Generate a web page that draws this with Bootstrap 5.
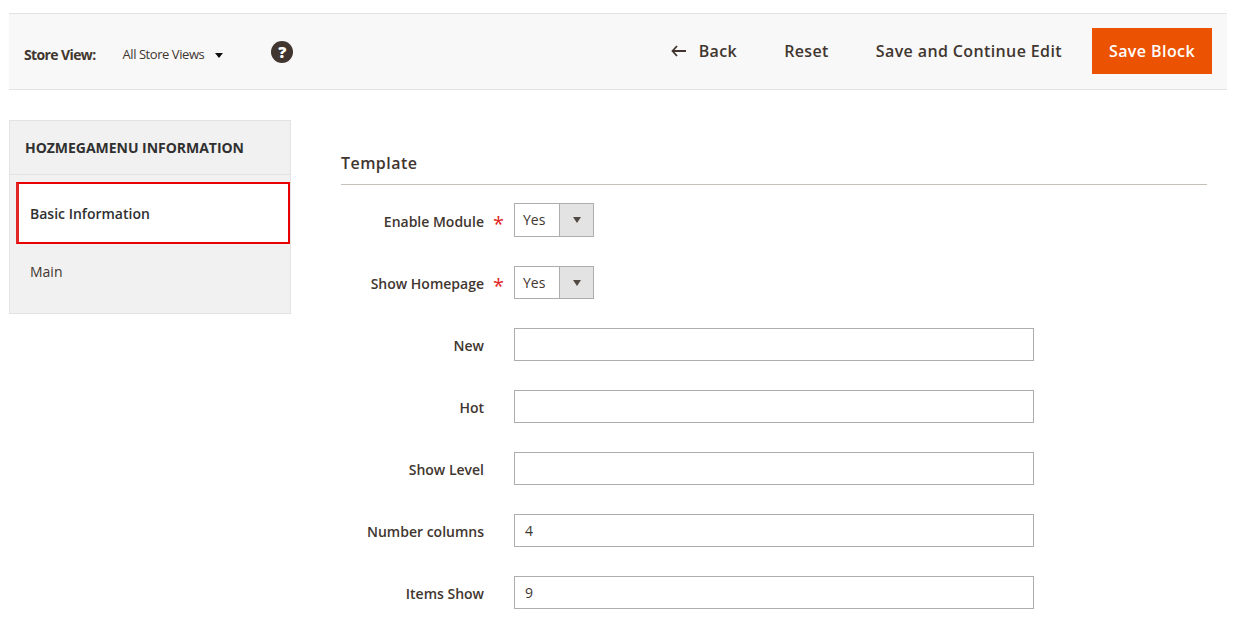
<!DOCTYPE html>
<html lang="en">
<head>
<meta charset="utf-8">
<title>Template</title>
<link href="https://cdn.jsdelivr.net/npm/bootstrap@5.3.0/dist/css/bootstrap.min.css" rel="stylesheet">
<style>
html,body{height:623px;overflow:hidden}
body{background:#fff;font-family:"Open Sans",sans-serif;color:#41362f;font-size:14px}
.pg{width:1218px;margin:13px 0 0 9px}
.tbar{height:77px;background:#f8f8f8;border-top:1px solid #e3e3e3;border-bottom:1px solid #e3e3e3;padding:0 15px}
.sv-label{font-size:14px;font-weight:700;letter-spacing:-.62px;color:#41362f;margin-top:5px}
.sv-val{font-size:13px;letter-spacing:-.44px;color:#41362f;margin-left:27px;margin-top:6px}
.sv-caret{width:0;height:0;border-left:4.5px solid transparent;border-right:4.5px solid transparent;border-top:5px solid #111;margin-left:11px;margin-top:8px}
.help{width:22px;height:22px;border-radius:50%;background:#41362f;color:#fff;font-weight:800;font-size:16px;line-height:22px;text-align:center;margin-left:48px}
.act{font-size:16px;font-weight:600;color:#41362f;letter-spacing:.38px;background:none;border:0;padding:0;margin-top:-2px}
.act-back{margin-right:47px;gap:12px;padding-left:2px}
.act-reset{margin-right:47px}
.act-save{margin-right:30px}
.act-main{width:120px;height:46px;background:#eb5202;color:#fff;font-size:16px;font-weight:600;letter-spacing:.42px;border:0;padding:0;margin-top:-1px}
.mainrow{margin-top:30px}
.side{width:282px;height:194px;background:#f1f1f1;border:1px solid #e3e3e3;flex:none}
.side-h{height:54px;padding:0 15px;font-size:14px;font-weight:700;letter-spacing:-.03px;color:#303030;border-bottom:1px solid #e3e3e3;margin-bottom:7px;line-height:53px}
.side-a{display:block;height:62px;margin-left:6px;width:274px;background:#fff;border:2px solid #e90000;border-left:3px solid #e22626;padding-left:11px;font-size:14px;font-weight:600;line-height:60px;color:#303030}
.side-b{padding:16px 20px;font-size:14px;line-height:24px;color:#41362f}
.content{margin-left:50px;width:866px}
.fs-t{font-size:16px;font-weight:600;color:#41362f;letter-spacing:.45px;height:46px;margin-top:19px;line-height:48px;border-bottom:1px solid #c5c1b6;margin-bottom:18px;padding-bottom:0}
.frow{height:33px;margin-bottom:29px}
.flabel{width:143px;text-align:right;font-size:14px;font-weight:600;color:#41362f;flex:none;padding-top:1px}
.req{width:30px;flex:none;color:#e22626;font-size:20px;line-height:1;padding-left:9px;padding-top:7px}
.finput{width:520px;height:33px;border:1px solid #adadad;padding:0 10px;font-size:14px;color:#41362f;line-height:31px;background:#fff}
.fsel{width:80px;height:34px;border:1px solid #adadad;background:#fff}
.fsel-v{width:44px;padding-left:8px;font-size:14px;line-height:32px}
.fsel-b{flex:1;background:#e3e3e3;border-left:1px solid #adadad}
.fsel-c{width:0;height:0;border-left:4.5px solid transparent;border-right:4.5px solid transparent;border-top:6px solid #514943}
.frow-s{height:34px;margin-bottom:29px}
.frow-s .flabel{padding-top:3px}
.frow-s2{height:33px;margin-bottom:29px}
.frow-s2 .fsel{height:33px}
.frow-s2 .fsel-v{line-height:31px}
</style>
</head>
<body>
<div class="pg">
  <div class="tbar d-flex align-items-center">
    <span class="sv-label">Store View:</span>
    <span class="sv-val">All Store Views</span>
    <span class="sv-caret"></span>
    <span class="help">?</span>
    <div class="ms-auto d-flex align-items-center">
      <button class="act act-back d-flex align-items-center" type="button">
        <svg width="16" height="12" viewBox="0 0 16 12"><path d="M6 1 1.5 6 6 11M2 6h13" fill="none" stroke="#41362f" stroke-width="1.8"/></svg>
        <span>Back</span>
      </button>
      <button class="act act-reset" type="button">Reset</button>
      <button class="act act-save" type="button">Save and Continue Edit</button>
      <button class="act-main" type="button">Save Block</button>
    </div>
  </div>
  <div class="mainrow d-flex">
    <div class="side">
      <div class="side-h">HOZMEGAMENU INFORMATION</div>
      <a class="side-a text-decoration-none" href="#">Basic Information</a>
      <div class="side-b">Main</div>
    </div>
    <div class="content">
      <div class="fs-t">Template</div>
      <div class="frow-s d-flex align-items-center">
        <div class="flabel">Enable Module</div><div class="req">*</div>
        <div class="fsel d-flex"><div class="fsel-v">Yes</div><div class="fsel-b d-flex align-items-center justify-content-center"><span class="fsel-c"></span></div></div>
      </div>
      <div class="frow-s2 d-flex align-items-center">
        <div class="flabel">Show Homepage</div><div class="req">*</div>
        <div class="fsel d-flex"><div class="fsel-v">Yes</div><div class="fsel-b d-flex align-items-center justify-content-center"><span class="fsel-c"></span></div></div>
      </div>
      <div class="frow d-flex align-items-center"><div class="flabel">New</div><div class="req"></div><div class="finput"></div></div>
      <div class="frow d-flex align-items-center"><div class="flabel">Hot</div><div class="req"></div><div class="finput"></div></div>
      <div class="frow d-flex align-items-center"><div class="flabel">Show Level</div><div class="req"></div><div class="finput"></div></div>
      <div class="frow d-flex align-items-center"><div class="flabel">Number columns</div><div class="req"></div><div class="finput">4</div></div>
      <div class="frow d-flex align-items-center"><div class="flabel">Items Show</div><div class="req"></div><div class="finput">9</div></div>
    </div>
  </div>
</div>
<script src="https://cdn.jsdelivr.net/npm/bootstrap@5.3.0/dist/js/bootstrap.bundle.min.js"></script>
</body>
</html>
